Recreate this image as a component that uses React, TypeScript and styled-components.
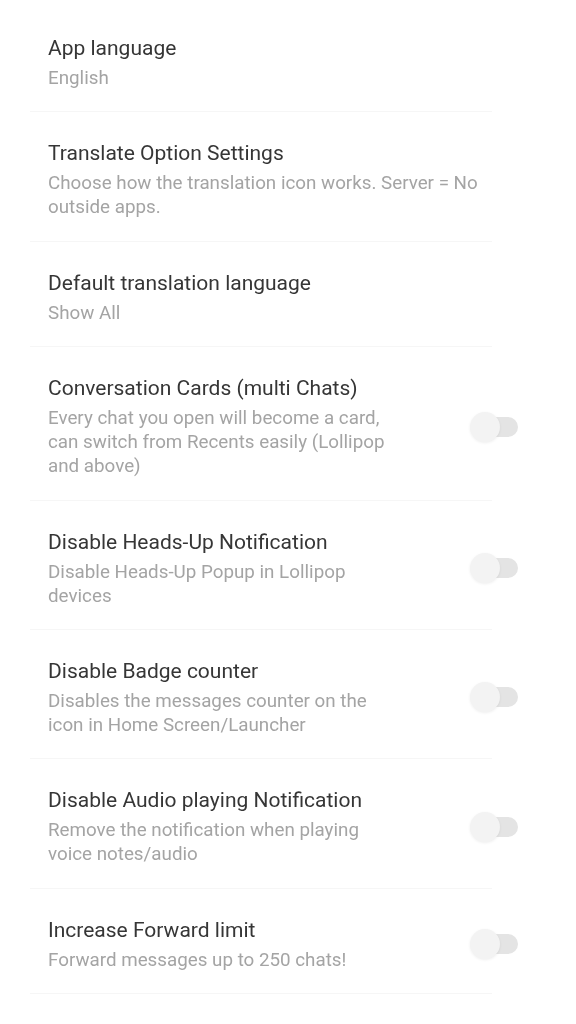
import React from "react";
import styled, { createGlobalStyle } from "styled-components";

const Global = createGlobalStyle`
  html, body { margin: 0; padding: 0; background: #ffffff; }
  body { font-family: Roboto, "Noto Sans", "Liberation Sans", sans-serif; -webkit-font-smoothing: antialiased; }
`;

const Page = styled.div`
  width: 576px;
  min-height: 1024px;
  background: #fff;
  padding-top: 7px;
  box-sizing: border-box;
  filter: blur(0.6px);
`;

const Row = styled.div`
  display: flex;
  align-items: center;
  padding: 28px 58px 22.4px 48px;
  position: relative;
  &::after {
    content: "";
    position: absolute;
    left: 30px;
    right: 84px;
    bottom: 0;
    height: 1px;
    background: #f6f6f6;
  }
`;

const TextCol = styled.div`
  display: flex;
  flex-direction: column;
  gap: 5px;
  flex: 1;
`;

const Title = styled.div`
  font-size: 21px;
  line-height: 26px;
  color: #363636;
`;

const Sub = styled.div`
  font-size: 18.8px;
  line-height: 24px;
  color: #a4a4a4;
  white-space: pre-line;
`;

const Switch = styled.div`
  position: relative;
  width: 36px;
  height: 20px;
  border-radius: 10px;
  background: #e4e4e4;
  margin-left: auto;
  flex-shrink: 0;
`;

const Thumb = styled.div`
  position: absolute;
  left: -12px;
  top: -5px;
  width: 30px;
  height: 30px;
  border-radius: 50%;
  background: #f3f3f3;
  box-shadow: 0 1px 3px rgba(0, 0, 0, 0.07);
`;

type Item = { title: string; sub: string; toggle?: boolean };

const items: Item[] = [
  { title: "App language", sub: "English" },
  {
    title: "Translate Option Settings",
    sub: "Choose how the translation icon works. Server = No\noutside apps.",
  },
  { title: "Default translation language", sub: "Show All" },
  {
    title: "Conversation Cards (multi Chats)",
    sub: "Every chat you open will become a card,\ncan switch from Recents easily (Lollipop\nand above)",
    toggle: true,
  },
  {
    title: "Disable Heads-Up Notification",
    sub: "Disable Heads-Up Popup in Lollipop\ndevices",
    toggle: true,
  },
  {
    title: "Disable Badge counter",
    sub: "Disables the messages counter on the\nicon in Home Screen/Launcher",
    toggle: true,
  },
  {
    title: "Disable Audio playing Notification",
    sub: "Remove the notification when playing\nvoice notes/audio",
    toggle: true,
  },
  {
    title: "Increase Forward limit",
    sub: "Forward messages up to 250 chats!",
    toggle: true,
  },
];

export default function App() {
  return (
    <>
      <Global />
      <Page>
        {items.map((it) => (
          <Row key={it.title}>
            <TextCol>
              <Title>{it.title}</Title>
              <Sub>{it.sub}</Sub>
            </TextCol>
            {it.toggle && (
              <Switch>
                <Thumb />
              </Switch>
            )}
          </Row>
        ))}
      </Page>
    </>
  );
}
